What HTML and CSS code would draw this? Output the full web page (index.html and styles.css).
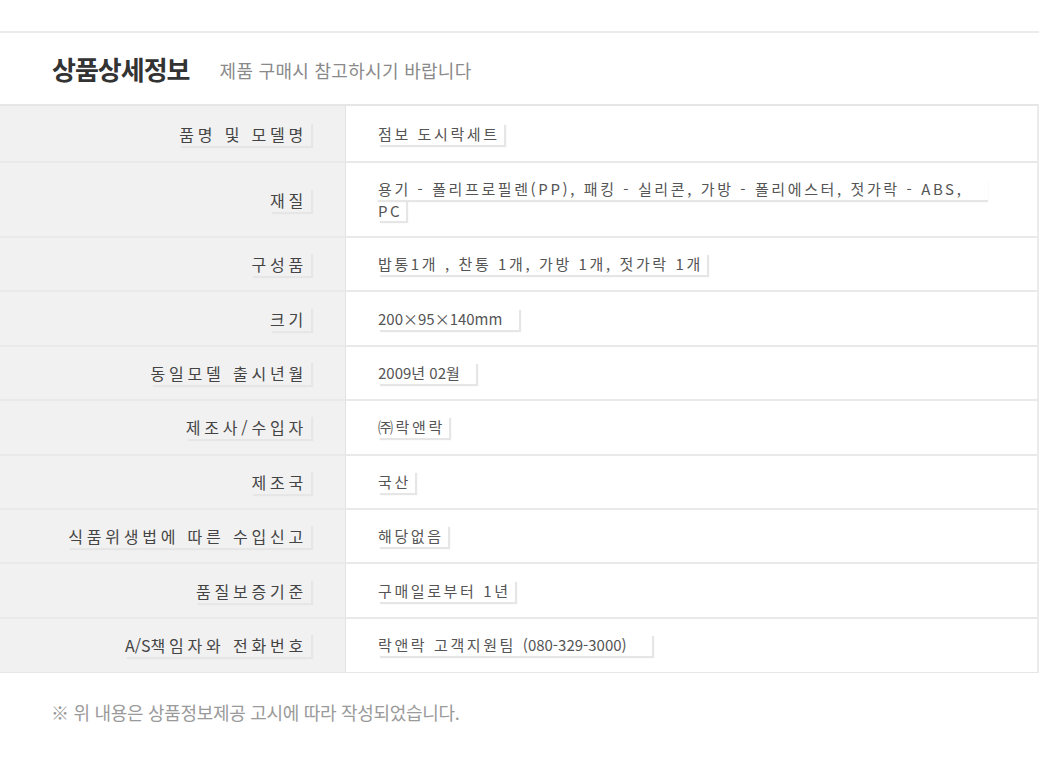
FILE: index.html
```html
<!DOCTYPE html>
<html lang="ko">
<head>
    <meta charset="UTF-8">
    <meta name="viewport" content="width=device-width, initial-scale=1.0">
    <title>상품상세정보</title>
    <link rel="stylesheet" href="styles.css">
</head>
<body>
<div class="detail">
    <div class="detail-head">
        <h2>상품상세정보</h2>
        <span class="sub">제품 구매시 참고하시기 바랍니다</span>
    </div>

    <div class="info-table">
        <div class="row first">
            <div class="label"><span>품명 및 모델명</span></div>
            <div class="value"><span>점보 도시락세트</span></div>
        </div>
        <div class="row tall">
            <div class="label"><span>재질</span></div>
            <div class="value">
                <div>
                    <span class="line">용기 - 폴리프로필렌(PP), 패킹 - 실리콘, 가방 - 폴리에스터, 젓가락 - ABS,</span><br>
                    <span>PC</span>
                </div>
            </div>
        </div>
        <div class="row">
            <div class="label"><span>구성품</span></div>
            <div class="value"><span>밥통1개 , 찬통 1개, 가방 1개, 젓가락 1개 </span></div>
        </div>
        <div class="row">
            <div class="label"><span>크기</span></div>
            <div class="value"><span class="num">200×95×140mm&nbsp;&nbsp;&nbsp;</span></div>
        </div>
        <div class="row">
            <div class="label"><span>동일모델 출시년월</span></div>
            <div class="value"><span class="num">2009년 02월&nbsp;&nbsp;&nbsp;</span></div>
        </div>
        <div class="row">
            <div class="label"><span>제조사/수입자</span></div>
            <div class="value"><span>㈜락앤락</span></div>
        </div>
        <div class="row">
            <div class="label"><span>제조국</span></div>
            <div class="value"><span>국산</span></div>
        </div>
        <div class="row">
            <div class="label"><span>식품위생법에 따른 수입신고</span></div>
            <div class="value"><span>해당없음</span></div>
        </div>
        <div class="row">
            <div class="label"><span>품질보증기준</span></div>
            <div class="value"><span>구매일로부터 1년</span></div>
        </div>
        <div class="row">
            <div class="label"><span><i class="num">A/S</i>책임자와 전화번호</span></div>
            <div class="value"><span>락앤락 고객지원팀 <i class="num">(080-329-3000)&nbsp;&nbsp;&nbsp;&nbsp;&nbsp;</i></span></div>
        </div>
    </div>

    <p class="notice">※ 위 내용은 상품정보제공 고시에 따라 작성되었습니다.</p>
</div>
</body>
</html>
```

FILE: styles.css
```css
body {
    margin: 0;
    padding: 0;
    background-color: #ffffff;
    font-family: "Noto Sans CJK KR", "Noto Sans", sans-serif;
}

.detail {
    width: 1039px;
    padding-top: 31px;
}

.detail-head {
    display: flex;
    align-items: center;
    height: 71px;
    padding-left: 52px;
    border-top: 2px solid #ececec;
}

.detail-head h2 {
    margin: 0;
    font-size: 26px;
    font-weight: bold;
    letter-spacing: -1px;
    color: #333;
}

.detail-head .sub {
    margin-left: 30px;
    margin-top: 3px;
    font-size: 18px;
    letter-spacing: 0.3px;
    color: #8a8a8a;
}

.info-table {
    border-top: 2px solid #e6e6e6;
    border-bottom: 1px solid #e6e6e6;
    border-right: 2px solid #ebebeb;
}

.row {
    display: grid;
    grid-template-columns: 345px 1fr;
    min-height: 52.4px;
    border-bottom: 2px solid #e9e9e9;
}

.row.first {
    min-height: 55px;
}

.row:last-child {
    border-bottom: none;
    min-height: 53px;
}

.label {
    display: flex;
    align-items: center;
    justify-content: flex-end;
    padding-right: 34px;
    background-color: #f1f1f1;
    font-size: 16px;
    letter-spacing: 3.8px;
    color: #444;
}

.value {
    display: flex;
    align-items: center;
    padding: 0 46px 0 32px;
    border-left: 1px solid #e2e2e2;
    font-size: 15px;
    letter-spacing: 2.6px;
    line-height: 22px;
    color: #555;
}

.row.tall .value {
    padding-top: 15px;
    padding-bottom: 14px;
}

/* text boxes carry a faint shadow like the original image */
.label > span,
.value span {
    padding-right: 4px;
    box-shadow: 2px 2px 1px #e6e6e6;
}

.value span.line {
    display: inline-block;
    width: 610px;
    padding-right: 0;
    box-shadow: 0 2px 1px #e6e6e6;
}

.num {
    font-style: normal;
    letter-spacing: 0;
}

.notice {
    margin: 26px 0 0 51px;
    font-size: 18px;
    letter-spacing: -0.3px;
    color: #9a9a9a;
}
```
